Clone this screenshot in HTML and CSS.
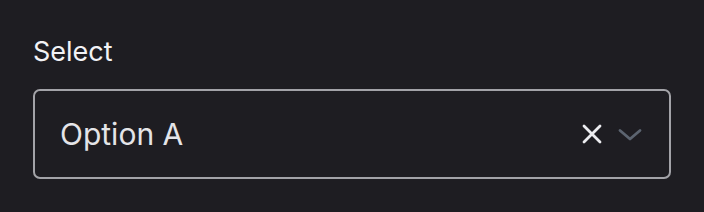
FILE: index.html
```html
<!DOCTYPE html>
<html>
<head>
<meta charset="utf-8">
<link rel="stylesheet" href="styles.css">
</head>
<body>
<div class="field">
  <label class="label">Select</label>
  <div class="select">
    <span class="value">Option A</span>
    <div class="icons">
      <svg class="clear" width="22" height="22" viewBox="0 0 22 22"><path d="M3 3 L19 19 M19 3 L3 19" stroke="#ececf0" stroke-width="2.8" stroke-linecap="round" fill="none"/></svg>
      <svg class="chev" width="26" height="14" viewBox="0 0 26 14"><path d="M3 2.5 L13 11 L23 2.5" stroke="#5c6470" stroke-width="2.8" stroke-linecap="round" stroke-linejoin="round" fill="none"/></svg>
    </div>
  </div>
</div>
</body>
</html>
```
FILE: styles.css
```css
html, body {
  margin: 0;
  padding: 0;
  background: #1e1d22;
  width: 704px;
  height: 212px;
  overflow: hidden;
}
.field {
  padding: 35px 33px 0 33px;
  display: flex;
  flex-direction: column;
  font-family: Inter, "Noto Sans", sans-serif;
}
.label {
  color: #f2f2f5;
  font-size: 27px;
  line-height: 33px;
  margin-bottom: 21px;
}
.select {
  box-sizing: border-box;
  width: 638px;
  height: 90px;
  border: 2px solid #a3a3a8;
  border-radius: 7px;
  display: flex;
  align-items: center;
  padding: 0 26px 0 25px;
}
.value {
  flex: 1;
  color: #e4e4e8;
  font-size: 30px;
  margin-top: -1px;
}
.icons {
  display: flex;
  align-items: center;
  gap: 14px;
}
.clear { display: block; }
.chev { display: block; margin-top: 1px; }
```
